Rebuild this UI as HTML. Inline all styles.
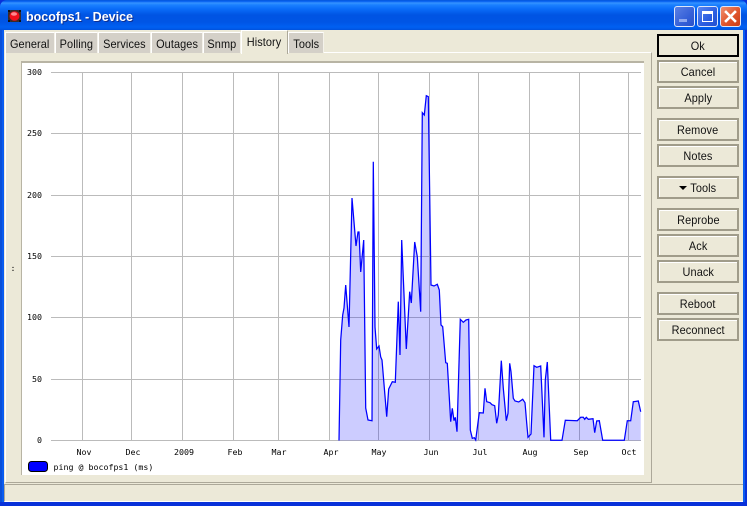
<!DOCTYPE html>
<html><head><meta charset="utf-8"><style>
html,body{margin:0;padding:0;background:#ece9d8}
#w{position:relative;width:747px;height:506px;overflow:hidden;background:#0831d9;font:12px "Liberation Sans",sans-serif;color:#111}
.a{position:absolute;box-sizing:border-box}
i{font-style:normal;display:inline-block;transform:scaleX(.91);letter-spacing:.1px;white-space:nowrap}
#tb{left:0;top:0;width:747px;height:30px;border-radius:7px 7px 0 0;background:linear-gradient(#0a5bd8 0,#0058ee 1px,#3593ff 3px,#1a80ff 5px,#0a6cf8 9px,#0054e3 15px,#0055e5 22px,#0060f2 27px,#0058e8 29px,#0050d8 30px)}
#body{left:4px;top:30px;width:739px;height:472px;background:#ece9d8}
.tab{top:32px;height:21px;background:#d4d0c8;border-top:1px solid #fff;border-left:1px solid #fff;border-right:1px solid #f4f2ea;text-align:center;line-height:22px}
.btn{left:657px;width:82px;height:23px;background:#ece9d8;border:2px solid #a09c8a;box-shadow:inset 1px 1px 0 #fff;text-align:center;line-height:21px}
.wb{top:6px;width:21px;height:21px;border-radius:3px;border:1px solid #dce6fa}
</style></head><body><div id="w">
<div class="a" id="tb"></div>
<div class="a" style="left:0;top:30px;width:2px;height:472px;background:#0a4fd8"></div>
<div class="a" style="left:2px;top:30px;width:2px;height:472px;background:#0a5cf0"></div>
<div class="a" style="left:743px;top:30px;width:2px;height:472px;background:#0a5cf0"></div>
<svg class="a" style="left:7px;top:9px" width="15" height="14" viewBox="0 0 15 14">
<rect x="1" y="1" width="13" height="12" rx="3" fill="#3a2a28"/>
<path d="M1 1h2v2H1zM12 1h2v2h-2zM1 11h2v2H1zM12 11h2v2h-2z" fill="#111"/>
<ellipse cx="7.5" cy="7" rx="5" ry="4.7" fill="#f0101c"/>
<ellipse cx="7" cy="5" rx="3" ry="1.8" fill="#ff8a90"/>
</svg>
<div class="a" style="left:26px;top:9px;font:bold 12.5px/17px 'Liberation Sans',sans-serif;color:#fff;text-shadow:1px 1px 0 #0f2f90;white-space:nowrap">bocofps1 - Device</div>

<div class="a wb" style="left:674px;background:linear-gradient(135deg,#5a80e4,#3560d8 60%,#2a50c8)"><div class="a" style="left:4px;top:12px;width:8px;height:3px;background:#8fa8ee"></div></div>
<div class="a wb" style="left:697px;background:linear-gradient(135deg,#5a86f0,#2a5ce0 60%,#2450d0)"><div class="a" style="left:4px;top:4px;width:11px;height:11px;border:1px solid #fff;border-top:3px solid #fff"></div></div>
<div class="a wb" style="left:720px;background:linear-gradient(135deg,#f09070,#e0552c 55%,#c83c18)">
<svg class="a" style="left:3px;top:3px" width="13" height="13" viewBox="0 0 13 13"><path d="M2 2L11 11M11 2L2 11" stroke="#fff" stroke-width="2.6" stroke-linecap="square"/></svg></div>

<div class="a" id="body"></div>
<div class="a" style="left:5px;top:52px;width:647px;height:431px;background:#ece9d8;border-top:1px solid #fff;border-left:1px solid #fff;border-right:1px solid #aca899;border-bottom:1px solid #aca899"></div>

<div class="a tab" style="left:5px;width:50px"><i>General</i></div>
<div class="a tab" style="left:55px;width:43px"><i>Polling</i></div>
<div class="a tab" style="left:98px;width:53px"><i>Services</i></div>
<div class="a tab" style="left:151px;width:52px"><i>Outages</i></div>
<div class="a tab" style="left:203px;width:38px"><i>Snmp</i></div>
<div class="a tab" style="left:241px;top:30px;width:47px;height:24px;background:#ece9d8;line-height:22px;border-right:1px solid #aca899"><i>History</i></div>
<div class="a tab" style="left:288px;width:36px"><i>Tools</i></div>

<div class="a" style="left:21px;top:61px;width:623px;height:414px;background:#fff;border-top:2px solid #b8b4a4;border-left:1px solid #b8b4a4"></div>

<svg class="a" style="left:0;top:0" width="747" height="506" font-family="'DejaVu Sans Mono','Liberation Mono',monospace" font-size="8.3" fill="#000">
<g stroke="#bbb" stroke-width="1" shape-rendering="crispEdges">
<path d="M51 72.5H641M51 133.5H641M51 195.5H641M51 256.5H641M51 317.5H641M51 379.5H641M51 440.5H641"/>
<path d="M82.5 72V440M131.5 72V440M182.5 72V440M233.5 72V440M278.5 72V440M329.5 72V440M378.5 72V440M429.5 72V440M478.5 72V440M529.5 72V440M579.5 72V440M628.5 72V440"/>
</g>
<path fill="#0000ff" fill-opacity=".2" stroke="none" d="M339 440.5L340.7 340 342.7 315 344 308 345.7 285 349 327 352 198 356 246 358 232 359 232 360.7 272 363.7 240 365.7 408 368 420 372 420.7 373.3 161.7 375 327 376.7 349 379 346 380.7 357 382 360 386.7 416.7 388.7 389 392.3 381.7 395.3 382.3 398.3 301.7 400 355 401.7 240 406.3 349 409.7 291.7 411.3 303 414.7 242 417.3 256.7 420.7 311.7 422.3 112.7 424.3 115 426.3 95.7 428.3 96.7 431 285 434 286 437.3 284.3 439.3 290 441 325 442.7 326.7 445.7 362.7 447.3 363.3 450.7 421.7 452.3 408.3 454 420.7 455.3 417.3 457 431.7 460.3 319.3 463.3 322.3 466 320 468.7 319.3 470.3 430 472.3 438.3 474.3 437.7 475.7 440 479.3 412.7 483.3 413 485 388.3 486.7 401.7 490 402.7 492 404.7 494.7 405.7 496.7 423.3 498.3 415 501.3 360.7 503.3 388.3 506.3 420.7 508 413.3 509.7 363.3 511 371.7 513.3 398.3 515 401 518.7 402 522.7 399.3 525 402.7 526.7 423 528 437.3 531 434 534 365.7 536.7 367.3 540.7 366 544 437.3 545.3 380 547.3 362 550.7 440.3 562 440.3 565.3 420.3 577.3 420.7 580.7 417.3 583.3 417.3 584.7 419.3 586.3 417.3 588.3 419.3 593 418.7 594.7 432.7 596.7 421 599.3 420.7 602.7 440.3 624.3 440.3 627.3 420.7 630.7 420.7 633.3 401.7 638.3 401 640.7 411.7 640.7 440.5Z"/>
<path fill="none" stroke="#0000ff" stroke-width="1.25" d="M339 440.5L340.7 340 342.7 315 344 308 345.7 285 349 327 352 198 356 246 358 232 359 232 360.7 272 363.7 240 365.7 408 368 420 372 420.7 373.3 161.7 375 327 376.7 349 379 346 380.7 357 382 360 386.7 416.7 388.7 389 392.3 381.7 395.3 382.3 398.3 301.7 400 355 401.7 240 406.3 349 409.7 291.7 411.3 303 414.7 242 417.3 256.7 420.7 311.7 422.3 112.7 424.3 115 426.3 95.7 428.3 96.7 431 285 434 286 437.3 284.3 439.3 290 441 325 442.7 326.7 445.7 362.7 447.3 363.3 450.7 421.7 452.3 408.3 454 420.7 455.3 417.3 457 431.7 460.3 319.3 463.3 322.3 466 320 468.7 319.3 470.3 430 472.3 438.3 474.3 437.7 475.7 440 479.3 412.7 483.3 413 485 388.3 486.7 401.7 490 402.7 492 404.7 494.7 405.7 496.7 423.3 498.3 415 501.3 360.7 503.3 388.3 506.3 420.7 508 413.3 509.7 363.3 511 371.7 513.3 398.3 515 401 518.7 402 522.7 399.3 525 402.7 526.7 423 528 437.3 531 434 534 365.7 536.7 367.3 540.7 366 544 437.3 545.3 380 547.3 362 550.7 440.3 562 440.3 565.3 420.3 577.3 420.7 580.7 417.3 583.3 417.3 584.7 419.3 586.3 417.3 588.3 419.3 593 418.7 594.7 432.7 596.7 421 599.3 420.7 602.7 440.3 624.3 440.3 627.3 420.7 630.7 420.7 633.3 401.7 638.3 401 640.7 411.7"/>
<g text-anchor="end">
<text x="42" y="75">300</text><text x="42" y="136">250</text><text x="42" y="198">200</text><text x="42" y="259">150</text><text x="42" y="320">100</text><text x="42" y="382">50</text><text x="42" y="443">0</text>
</g>
<text x="13" y="271" text-anchor="middle">:</text>
<g text-anchor="middle">
<text x="84" y="455">Nov</text><text x="133" y="455">Dec</text><text x="184" y="455">2009</text><text x="235" y="455">Feb</text><text x="279" y="455">Mar</text><text x="331" y="455">Apr</text><text x="379" y="455">May</text><text x="431" y="455">Jun</text><text x="480" y="455">Jul</text><text x="530" y="455">Aug</text><text x="581" y="455">Sep</text><text x="629" y="455">Oct</text>
</g>
<rect x="28.5" y="461.5" width="19" height="10" rx="3" fill="#0000ff" stroke="#000" stroke-width="1"/>
<text x="53.5" y="470">ping @ bocofps1 (ms)</text>
</svg>

<div class="a btn" style="top:34px;border-color:#000;box-shadow:none"><i>Ok</i></div>
<div class="a btn" style="top:60px"><i>Cancel</i></div>
<div class="a btn" style="top:86px"><i>Apply</i></div>
<div class="a btn" style="top:118px"><i>Remove</i></div>
<div class="a btn" style="top:144px"><i>Notes</i></div>
<div class="a btn" style="top:176px"><span style="display:inline-block;width:0;height:0;border:4px solid transparent;border-top:4px solid #000;border-bottom:0;margin-right:2px;vertical-align:2px"></span><i>Tools</i></div>
<div class="a btn" style="top:208px"><i>Reprobe</i></div>
<div class="a btn" style="top:234px"><i>Ack</i></div>
<div class="a btn" style="top:260px"><i>Unack</i></div>
<div class="a btn" style="top:292px"><i>Reboot</i></div>
<div class="a btn" style="top:318px"><i>Reconnect</i></div>

<div class="a" style="left:4px;top:484px;width:739px;height:18px;background:#ece9d8;border-top:1px solid #aca899;border-left:1px solid #aca899;border-bottom:1px solid #fff"></div>
</div></body></html>
